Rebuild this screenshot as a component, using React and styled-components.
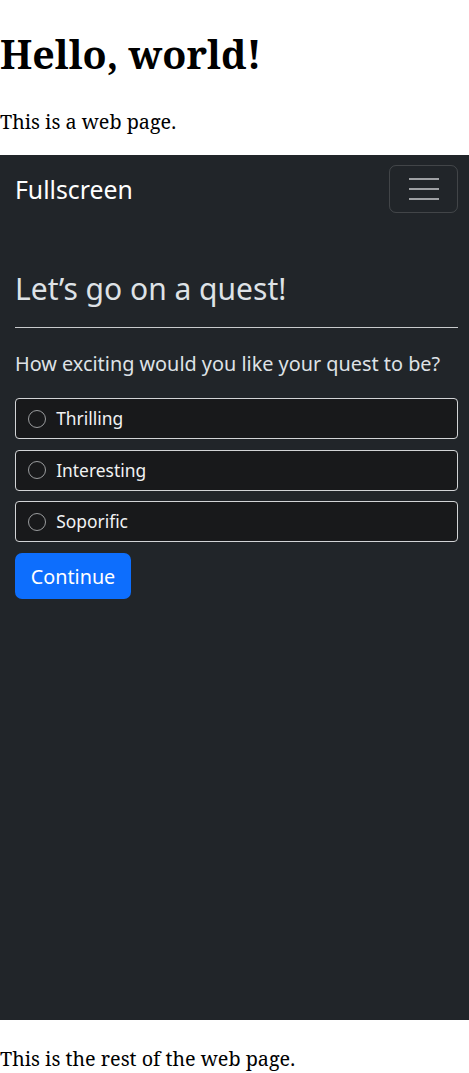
import React from 'react'
import styled, { createGlobalStyle } from 'styled-components'

const GlobalStyle = createGlobalStyle`
    body {
        margin: 0;
        font-family: "Noto Serif", serif;
        font-size: 19.8px;
        color: #000;
        background: #fff;
    }
`

const PageTitle = styled.h1`
    font-size: 39.4px;
    font-weight: 700;
    margin: 27px 0 27.4px;
    line-height: normal;
`

const PageText = styled.p`
    margin: ${({ $top }) => $top || '20px'} 0 20px;
    line-height: normal;
`

const Panel = styled.section`
    height: 865px;
    background: #212529;
    color: #dee2e6;
    font-family: "Noto Sans", sans-serif;
    font-size: 19.85px;
    line-height: 1.5;
    box-sizing: border-box;
    overflow: hidden;
`

const Navbar = styled.nav`
    display: flex;
    justify-content: space-between;
    align-items: center;
    padding: 10px 11px 10px 15px;
`

const Brand = styled.span`
    font-size: 24.8px;
    color: #fff;
    line-height: 1.5;
`

const Toggler = styled.button`
    width: 69px;
    height: 48px;
    display: flex;
    align-items: center;
    justify-content: center;
    background: transparent;
    border: 1px solid rgba(255, 255, 255, 0.15);
    border-radius: 7px;
    padding: 0;
`

const Content = styled.div`
    padding: 48px 11px 0 15px;
`

const Heading = styled.h2`
    font-size: 30px;
    font-weight: 400;
    line-height: 1.2;
    margin: 0;
    color: #dee2e6;
`

const Rule = styled.hr`
    border: 0;
    border-top: 1px solid #c8cacc;
    margin: 19.4px 0 21.5px;
`

const Question = styled.p`
    margin: 0 0 19px;
`

const Options = styled.div`
    display: flex;
    flex-direction: column;
    gap: 10.5px;
`

const Option = styled.label`
    display: flex;
    align-items: center;
    gap: 10px;
    height: 41px;
    box-sizing: border-box;
    padding: 0 12px 0 12.2px;
    background: #18191b;
    border: 1px solid #d2d4d6;
    border-radius: 4px;
    font-size: 17.4px;
    color: #f1f2f3;
`

const Radio = styled.span`
    width: 18px;
    height: 18px;
    box-sizing: border-box;
    border-radius: 50%;
    border: 1.6px solid #9a9c9e;
    flex-shrink: 0;
`

const Button = styled.button`
    margin-top: 11px;
    height: 46px;
    width: 116px;
    padding: 0;
    background: #0d6efd;
    color: #fff;
    border: 0;
    border-radius: 7px;
    font-family: "Noto Sans", sans-serif;
    font-size: 19.8px;
`

const options = ['Thrilling', 'Interesting', 'Soporific']

function App() {
    return (
        <>
            <GlobalStyle />
            <PageTitle>Hello, world!</PageTitle>
            <PageText>This is a web page.</PageText>
            <Panel>
                <Navbar>
                    <Brand>Fullscreen</Brand>
                    <Toggler aria-label="menu">
                        <svg width="30" height="22" viewBox="0 0 30 22">
                            <g stroke="#9fa1a4" strokeWidth="2">
                                <line x1="0" y1="1" x2="30" y2="1" />
                                <line x1="0" y1="11" x2="30" y2="11" />
                                <line x1="0" y1="21" x2="30" y2="21" />
                            </g>
                        </svg>
                    </Toggler>
                </Navbar>
                <Content>
                    <Heading>Let’s go on a quest!</Heading>
                    <Rule />
                    <Question>How exciting would you like your quest to be?</Question>
                    <Options>
                        {options.map(o => (
                            <Option key={o}>
                                <Radio />
                                {o}
                            </Option>
                        ))}
                    </Options>
                    <Button>Continue</Button>
                </Content>
            </Panel>
            <PageText $top="25px">This is the rest of the web page.</PageText>
        </>
    )
}

export default App
